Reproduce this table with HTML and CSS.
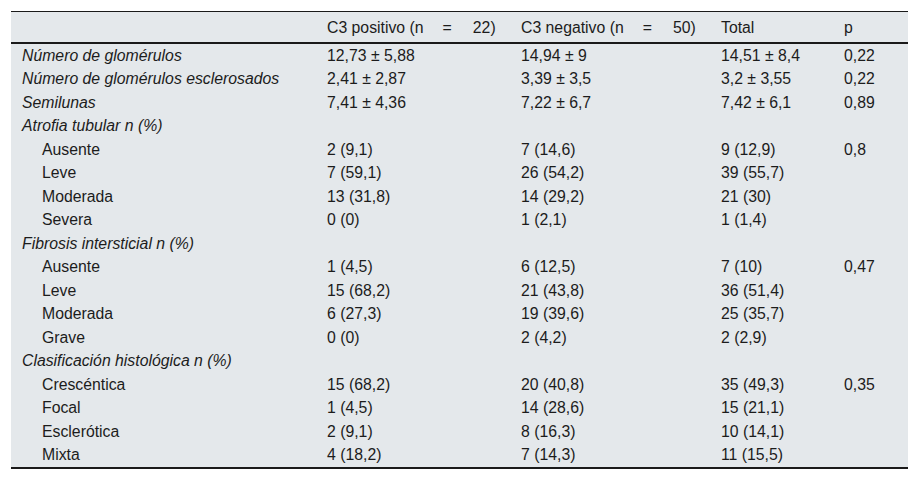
FILE: index.html
```html
<!DOCTYPE html>
<html lang="es">
<head>
<meta charset="utf-8">
<link rel="stylesheet" href="styles.css">
</head>
<body>
<table class="tbl">
  <colgroup>
    <col class="c1"><col class="c2"><col class="c3"><col class="c4"><col class="c5">
  </colgroup>
  <thead>
    <tr>
      <th></th>
      <th>C3 positivo (n<span class="g1"></span>=<span class="g2"></span>22)</th>
      <th>C3 negativo (n<span class="g1"></span>=<span class="g2"></span>50)</th>
      <th>Total</th>
      <th>p</th>
    </tr>
  </thead>
  <tbody>
    <tr><td class="it">Número de glomérulos</td><td>12,73 ± 5,88</td><td>14,94 ± 9</td><td>14,51 ± 8,4</td><td>0,22</td></tr>
    <tr><td class="it">Número de glomérulos esclerosados</td><td>2,41 ± 2,87</td><td>3,39 ± 3,5</td><td>3,2 ± 3,55</td><td>0,22</td></tr>
    <tr><td class="it">Semilunas</td><td>7,41 ± 4,36</td><td>7,22 ± 6,7</td><td>7,42 ± 6,1</td><td>0,89</td></tr>
    <tr><td class="it">Atrofia tubular n (%)</td><td></td><td></td><td></td><td></td></tr>
    <tr><td class="sub">Ausente</td><td>2 (9,1)</td><td>7 (14,6)</td><td>9 (12,9)</td><td>0,8</td></tr>
    <tr><td class="sub">Leve</td><td>7 (59,1)</td><td>26 (54,2)</td><td>39 (55,7)</td><td></td></tr>
    <tr><td class="sub">Moderada</td><td>13 (31,8)</td><td>14 (29,2)</td><td>21 (30)</td><td></td></tr>
    <tr><td class="sub">Severa</td><td>0 (0)</td><td>1 (2,1)</td><td>1 (1,4)</td><td></td></tr>
    <tr><td class="it">Fibrosis intersticial n (%)</td><td></td><td></td><td></td><td></td></tr>
    <tr><td class="sub">Ausente</td><td>1 (4,5)</td><td>6 (12,5)</td><td>7 (10)</td><td>0,47</td></tr>
    <tr><td class="sub">Leve</td><td>15 (68,2)</td><td>21 (43,8)</td><td>36 (51,4)</td><td></td></tr>
    <tr><td class="sub">Moderada</td><td>6 (27,3)</td><td>19 (39,6)</td><td>25 (35,7)</td><td></td></tr>
    <tr><td class="sub">Grave</td><td>0 (0)</td><td>2 (4,2)</td><td>2 (2,9)</td><td></td></tr>
    <tr><td class="it">Clasificación histológica n (%)</td><td></td><td></td><td></td><td></td></tr>
    <tr><td class="sub">Crescéntica</td><td>15 (68,2)</td><td>20 (40,8)</td><td>35 (49,3)</td><td>0,35</td></tr>
    <tr><td class="sub">Focal</td><td>1 (4,5)</td><td>14 (28,6)</td><td>15 (21,1)</td><td></td></tr>
    <tr><td class="sub">Esclerótica</td><td>2 (9,1)</td><td>8 (16,3)</td><td>10 (14,1)</td><td></td></tr>
    <tr><td class="sub">Mixta</td><td>4 (18,2)</td><td>7 (14,3)</td><td>11 (15,5)</td><td></td></tr>
  </tbody>
</table>
</body>
</html>
```

FILE: styles.css
```css
html, body {
  margin: 0;
  padding: 0;
  background: #ffffff;
}
body {
  padding: 11px 0 0 11px;
  font-family: "Liberation Sans", Arial, sans-serif;
  font-size: 15.8px;
  color: #1c1c1c;
}
.tbl {
  width: 897px;
  table-layout: fixed;
  border-collapse: collapse;
  background: #e4e8eb;
  border-top: 1px solid #1a1a1a;
  border-bottom: 2px solid #1a1a1a;
}
.c1 { width: 305px; }
.c2 { width: 194px; }
.c3 { width: 200px; }
.c4 { width: 123px; }
.c5 { width: 75px; }
.tbl th {
  font-weight: normal;
  text-align: left;
  height: 31px;
  padding: 2px 0 0 11px;
  box-sizing: border-box;
  vertical-align: middle;
  line-height: 18px;
  border-bottom: 2px solid #1a1a1a;
  white-space: nowrap;
}
.g1 { display: inline-block; width: 19px; }
.g2 { display: inline-block; width: 21px; }
.tbl td {
  padding: 3px 0 3px 11px;
  line-height: 17.5px;
  height: 17.5px;
  vertical-align: middle;
  white-space: nowrap;
}
.tbl td.it { font-style: italic; }
.tbl td.sub { padding-left: 31px; }
```
